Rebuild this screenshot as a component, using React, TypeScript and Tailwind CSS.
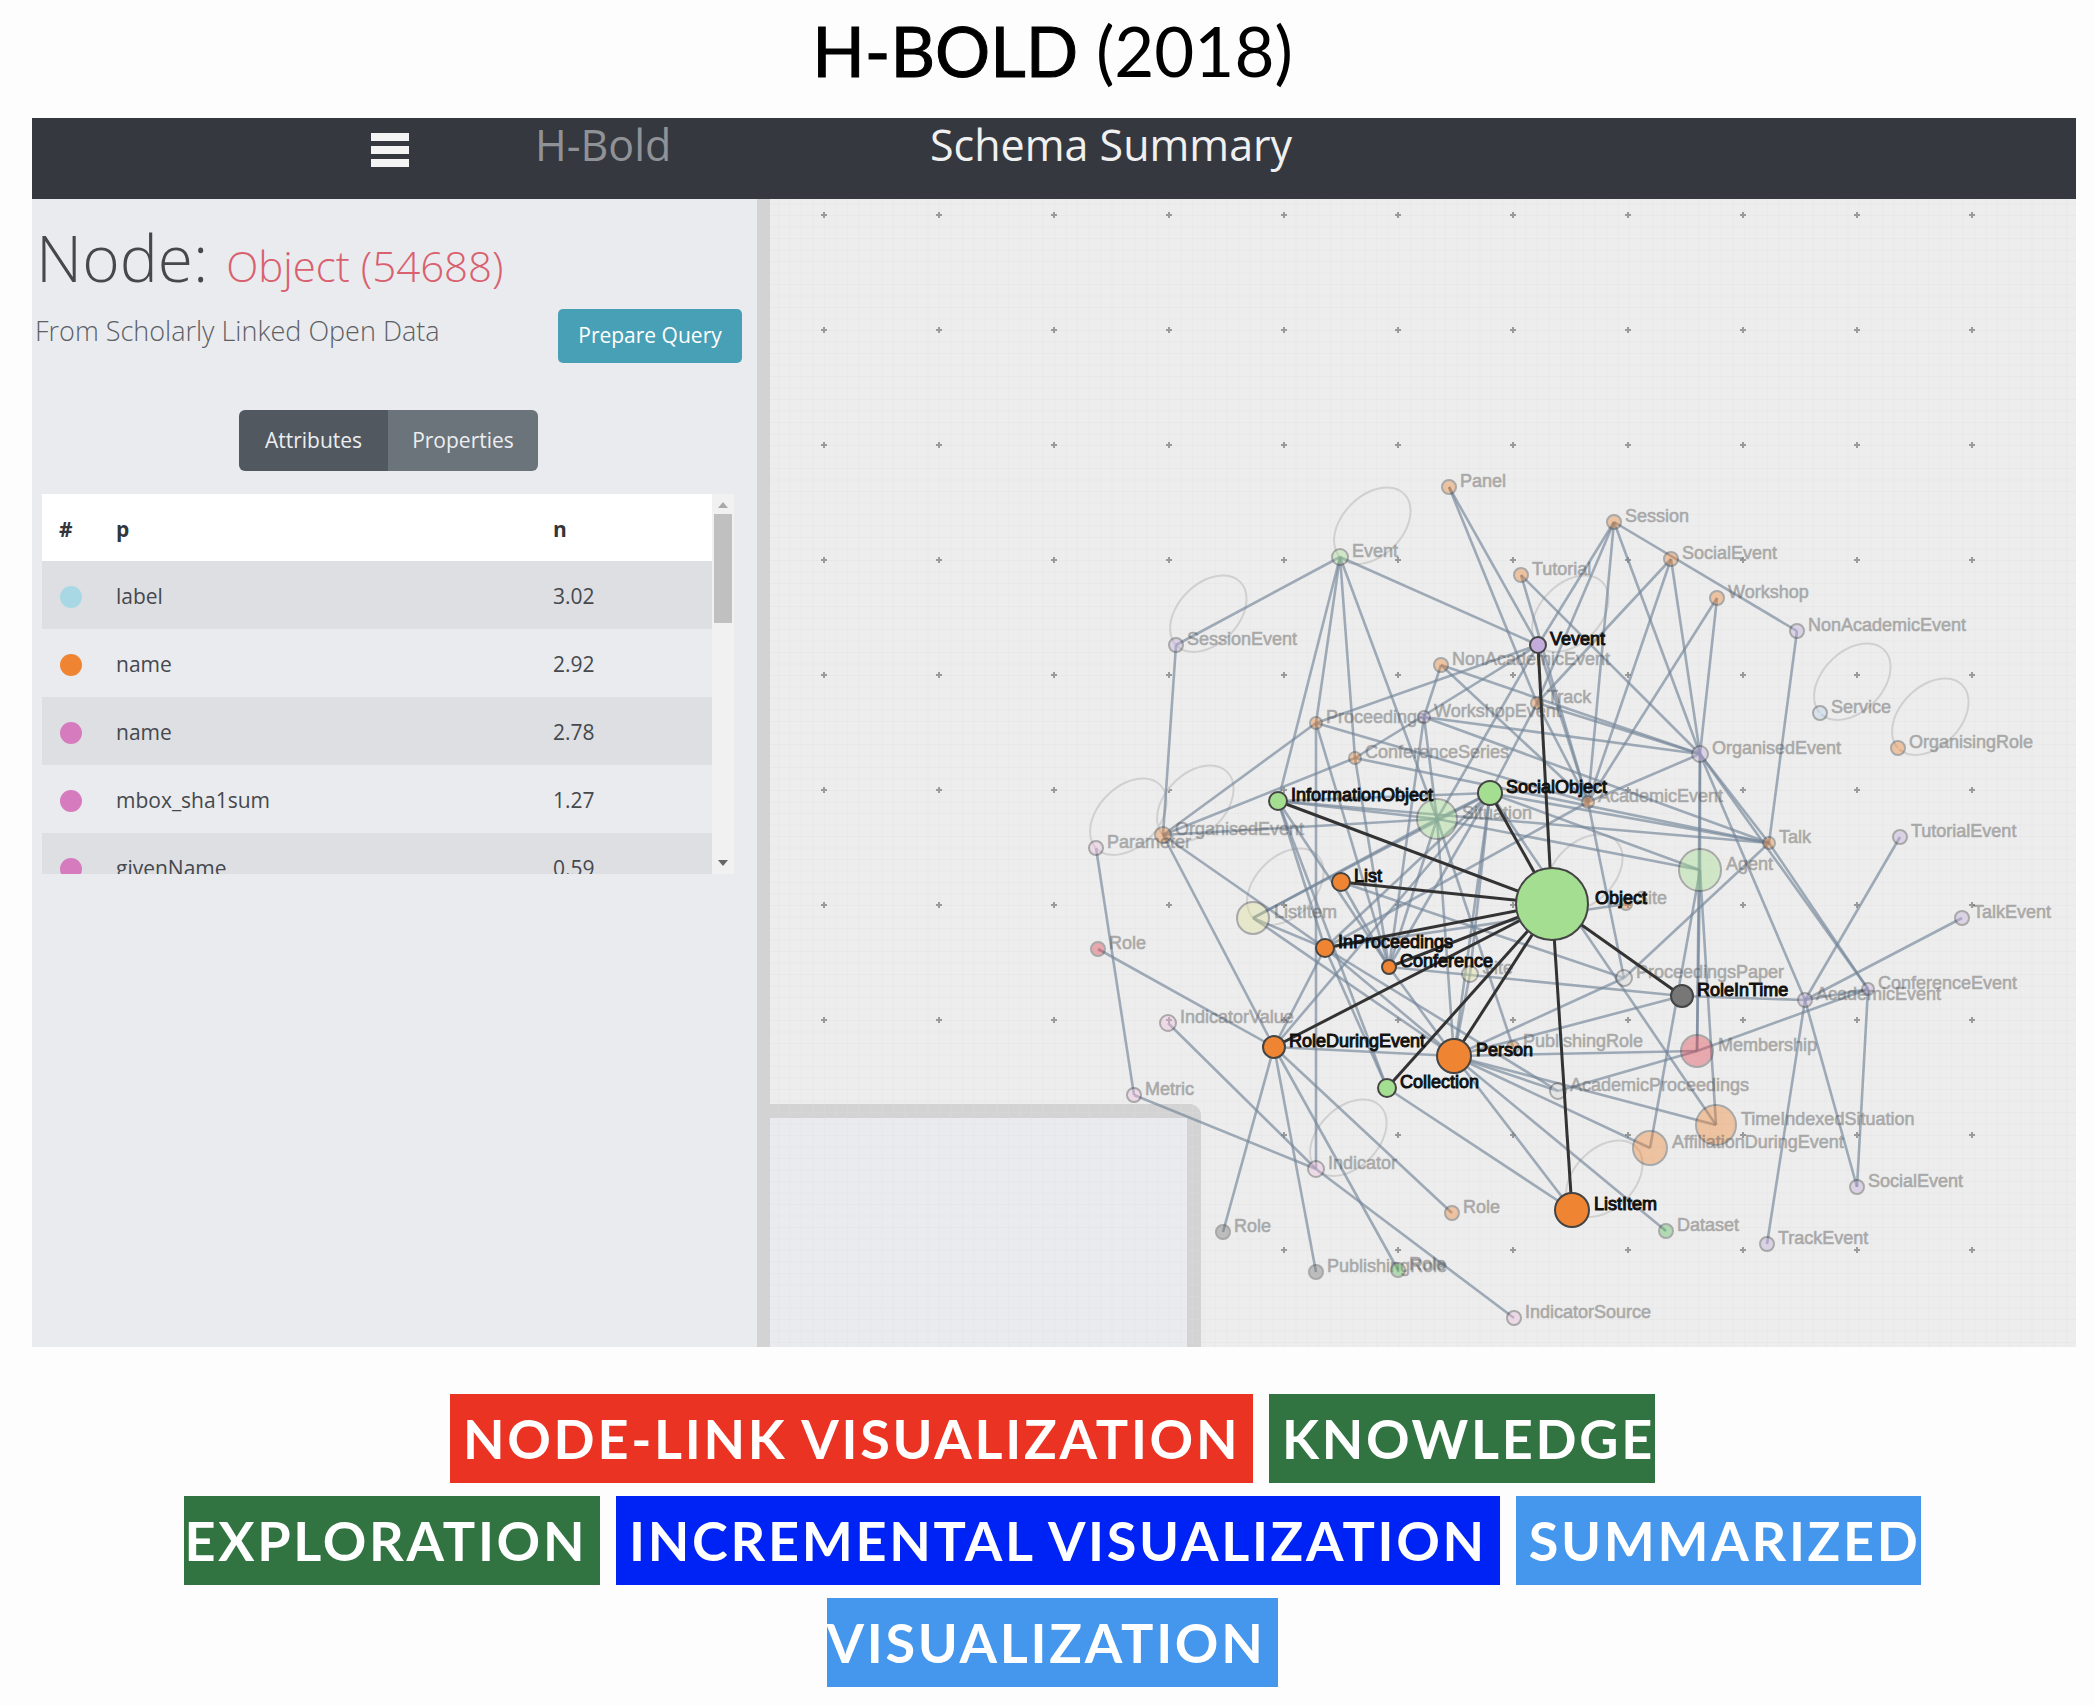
import React from "react";
import clsx from "clsx";

type GraphNode = {
    id: string;
    x: number;
    y: number;
    r: number;
    color: string;
    label?: string;
    active?: boolean;
    loop?: boolean;
};

const ORANGE = "#ef8532";
const GREEN = "#a4de90";
const PURPLE = "#c3acdc";
const PINK = "#f0bfe0";
const GRAY = "#777777";
const RED = "#e0454f";
const YELLOW = "#dfe09a";

const nodes: GraphNode[] = [
    { id: "panel", x: 1449, y: 487, r: 7, color: ORANGE, label: "Panel" },
    { id: "session", x: 1614, y: 522, r: 7, color: ORANGE, label: "Session" },
    { id: "socialEvent", x: 1671, y: 559, r: 7, color: ORANGE, label: "SocialEvent" },
    { id: "tutorial", x: 1521, y: 575, r: 7, color: ORANGE, label: "Tutorial" },
    { id: "workshop", x: 1717, y: 598, r: 7, color: ORANGE, label: "Workshop" },
    { id: "nonAcademicP", x: 1797, y: 631, r: 7, color: PURPLE, label: "NonAcademicEvent" },
    { id: "event", x: 1340, y: 557, r: 8, color: GREEN, label: "Event", loop: true },
    { id: "sessionEvent", x: 1176, y: 645, r: 7, color: PURPLE, label: "SessionEvent", loop: true },
    { id: "nonAcademic", x: 1441, y: 665, r: 7, color: ORANGE, label: "NonAcademicEvent" },
    { id: "track", x: 1537, y: 703, r: 6, color: ORANGE, label: "Track" },
    { id: "proceedings", x: 1316, y: 723, r: 6, color: ORANGE, label: "Proceedings" },
    { id: "workshopEvent", x: 1424, y: 717, r: 6, color: PURPLE, label: "WorkshopEvent" },
    { id: "conferenceSeries", x: 1355, y: 758, r: 6, color: ORANGE, label: "ConferenceSeries" },
    { id: "service", x: 1820, y: 713, r: 7, color: "#b9d3ec", label: "Service", loop: true },
    { id: "organisingRole", x: 1898, y: 748, r: 7, color: ORANGE, label: "OrganisingRole", loop: true },
    { id: "organisedP", x: 1700, y: 754, r: 8, color: PURPLE, label: "OrganisedEvent" },
    { id: "academic", x: 1588, y: 802, r: 6, color: ORANGE, label: "AcademicEvent" },
    { id: "situation", x: 1437, y: 819, r: 20, color: GREEN, label: "Situation" },
    { id: "organised", x: 1163, y: 835, r: 8, color: ORANGE, label: "OrganisedEvent", loop: true },
    { id: "parameter", x: 1096, y: 848, r: 7, color: PINK, label: "Parameter", loop: true },
    { id: "talk", x: 1769, y: 843, r: 6, color: ORANGE, label: "Talk" },
    { id: "tutorialEvent", x: 1900, y: 837, r: 7, color: PURPLE, label: "TutorialEvent" },
    { id: "talkEvent", x: 1962, y: 918, r: 7, color: PURPLE, label: "TalkEvent" },
    { id: "agent", x: 1700, y: 870, r: 21, color: GREEN, label: "Agent" },
    { id: "site", x: 1626, y: 904, r: 6, color: ORANGE, label: "Site" },
    { id: "listItemY", x: 1253, y: 918, r: 16, color: YELLOW, label: "ListItem", loop: true },
    { id: "role", x: 1098, y: 949, r: 7, color: RED, label: "Role" },
    { id: "yellow", x: 1470, y: 974, r: 8, color: YELLOW, label: "Site" },
    { id: "paper", x: 1624, y: 978, r: 8, color: "#d9d9d9", label: "ProceedingsPaper" },
    { id: "conferenceEvent", x: 1868, y: 989, r: 6, color: PURPLE, label: "ConferenceEvent" },
    { id: "academicP", x: 1805, y: 1000, r: 7, color: PURPLE, label: "AcademicEvent" },
    { id: "indicatorValue", x: 1168, y: 1023, r: 8, color: PINK, label: "IndicatorValue" },
    { id: "publishingRole", x: 1513, y: 1047, r: 6, color: ORANGE, label: "PublishingRole" },
    { id: "membership", x: 1697, y: 1051, r: 16, color: RED, label: "Membership" },
    { id: "academicProceedings", x: 1558, y: 1091, r: 8, color: "#d9d9d9", label: "AcademicProceedings" },
    { id: "metric", x: 1134, y: 1095, r: 7, color: PINK, label: "Metric" },
    { id: "timeIndexed", x: 1716, y: 1125, r: 20, color: ORANGE, label: "TimeIndexedSituation" },
    { id: "affiliation", x: 1650, y: 1148, r: 17, color: ORANGE, label: "AffiliationDuringEvent" },
    { id: "indicator", x: 1316, y: 1169, r: 8, color: PINK, label: "Indicator", loop: true },
    { id: "socialEventP", x: 1857, y: 1187, r: 7, color: PURPLE, label: "SocialEvent" },
    { id: "roleOrange", x: 1452, y: 1213, r: 7, color: ORANGE, label: "Role" },
    { id: "roleGray", x: 1223, y: 1232, r: 7, color: GRAY, label: "Role" },
    { id: "dataset", x: 1666, y: 1231, r: 7, color: "#5cbf5c", label: "Dataset" },
    { id: "trackEvent", x: 1767, y: 1244, r: 7, color: PURPLE, label: "TrackEvent" },
    { id: "publishingGray", x: 1316, y: 1272, r: 7, color: GRAY, label: "PublishingRole" },
    { id: "roleGreen", x: 1398, y: 1270, r: 7, color: "#5cbf5c", label: "Role" },
    { id: "indicatorSource", x: 1514, y: 1318, r: 7, color: PINK, label: "IndicatorSource" },
    { id: "vevent", x: 1538, y: 645, r: 8, color: PURPLE, label: "Vevent", active: true, loop: true },
    { id: "informationObject", x: 1278, y: 801, r: 9, color: GREEN, label: "InformationObject", active: true },
    { id: "socialObject", x: 1490, y: 793, r: 12, color: GREEN, label: "SocialObject", active: true },
    { id: "list", x: 1341, y: 882, r: 9, color: ORANGE, label: "List", active: true },
    { id: "inProceedings", x: 1325, y: 948, r: 9, color: ORANGE, label: "InProceedings", active: true },
    { id: "conference", x: 1389, y: 967, r: 7, color: ORANGE, label: "Conference", active: true },
    { id: "roleInTime", x: 1682, y: 996, r: 11, color: GRAY, label: "RoleInTime", active: true },
    { id: "roleDuring", x: 1274, y: 1047, r: 11, color: ORANGE, label: "RoleDuringEvent", active: true },
    { id: "person", x: 1454, y: 1056, r: 17, color: ORANGE, label: "Person", active: true },
    { id: "collection", x: 1387, y: 1088, r: 9, color: GREEN, label: "Collection", active: true },
    { id: "listItem", x: 1572, y: 1210, r: 17, color: ORANGE, label: "ListItem", active: true, loop: true },
    { id: "object", x: 1552, y: 904, r: 36, color: GREEN, label: "Object", active: true, loop: true },
];

// source -> targets
const links: Record<string, string[]> = {
    panel: ["vevent", "track"],
    tutorial: ["organisedP", "academic"],
    session: ["vevent", "track", "academic", "organisedP", "nonAcademicP"],
    socialEvent: ["track", "academic", "organisedP"],
    workshop: ["academic", "organisedP"],
    nonAcademicP: ["talk"],
    nonAcademic: ["workshopEvent", "academic", "organisedP"],
    organisedP: ["talk", "conferenceEvent", "academicP", "workshopEvent", "track", "academic", "membership", "agent"],
    talk: ["conferenceEvent", "paper", "socialObject", "conferenceSeries", "workshopEvent", "informationObject"],
    agent: ["affiliation", "membership", "timeIndexed", "socialObject", "situation"],
    event: ["sessionEvent", "vevent", "informationObject", "proceedings", "conferenceSeries", "situation"],
    organised: ["sessionEvent", "proceedings", "conferenceSeries", "roleDuring", "inProceedings", "situation"],
    proceedings: ["vevent", "indicator", "conference", "academic"],
    conferenceSeries: ["vevent", "conference"],
    workshopEvent: ["conference", "situation"],
    vevent: ["academic", "situation"],
    track: ["socialObject", "academic"],
    informationObject: ["conference", "inProceedings", "collection", "socialObject", "situation"],
    academic: ["paper", "inProceedings"],
    socialObject: ["conference", "inProceedings", "person", "yellow", "listItemY", "timeIndexed", "roleDuring", "situation"],
    situation: ["conference", "person", "listItemY", "publishingRole"],
    listItemY: ["person", "inProceedings"],
    list: ["conference", "paper"],
    conference: ["roleInTime", "person"],
    yellow: ["person"],
    inProceedings: ["person", "academicProceedings", "roleDuring", "collection", "site"],
    person: ["paper", "roleInTime", "membership", "timeIndexed", "affiliation", "listItem", "dataset", "academicProceedings"],
    membership: ["academicProceedings", "conferenceEvent"],
    collection: ["listItem"],
    academicP: ["tutorialEvent", "talkEvent", "conferenceEvent", "trackEvent", "socialEventP", "roleInTime"],
    conferenceEvent: ["socialEventP"],
    parameter: ["metric"],
    metric: ["indicator"],
    role: ["roleDuring"],
    indicatorValue: ["indicator"],
    indicator: ["indicatorSource"],
    roleDuring: ["person", "roleGray", "publishingGray", "roleGreen", "roleOrange"],
};

const activeLinks = [
    "informationObject", "socialObject", "vevent", "list", "inProceedings", "conference",
    "roleDuring", "person", "collection", "roleInTime", "listItem",
];

const byId = Object.fromEntries(nodes.map((n) => [n.id, n]));
const crossX = [824, 939, 1054, 1169, 1284, 1398, 1513, 1628, 1743, 1857, 1972];
const crossY = [215, 330, 445, 560, 675, 790, 905, 1020, 1135, 1250];

const attributes = [
    { color: "bg-[#a8d8e4]", p: "label", n: "3.02" },
    { color: "bg-[#ef8532]", p: "name", n: "2.92" },
    { color: "bg-[#d67bbd]", p: "name", n: "2.78" },
    { color: "bg-[#d67bbd]", p: "mbox_sha1sum", n: "1.27" },
    { color: "bg-[#d67bbd]", p: "givenName", n: "0.59" },
];

const Link = ({ from, to, active }: { from: string; to: string; active?: boolean }) => (
    <line
        x1={byId[from].x}
        y1={byId[from].y}
        x2={byId[to].x}
        y2={byId[to].y}
        stroke={active ? "#333333" : "#74869a"}
        strokeWidth={active ? 3 : 2.6}
        opacity={active ? 1 : 0.65}
    />
);

const Node = ({ node }: { node: GraphNode }) => (
    <g opacity={node.active ? 1 : 0.4}>
        <circle cx={node.x} cy={node.y} r={node.r} fill={node.color} stroke="#444444" strokeWidth="2" />
        <text
            x={Math.round(node.x + node.r * 1.1 + 3)}
            y={node.y}
            fill={node.active ? "#111111" : "#444444"}
            stroke={node.active ? "#111111" : "#444444"}
            strokeWidth={node.active ? 1 : 0.6}
        >
            {node.label}
        </text>
    </g>
);

function SchemaGraph() {
    return (
        <svg viewBox="770 199 1306 1148" className="relative block w-full font-['Liberation_Sans',Arial,sans-serif] text-[18px]">
            <defs>
                <pattern id="minor" x="824" y="215" width="11.5" height="11.5" patternUnits="userSpaceOnUse">
                    <path d="M11.5 0H0V11.5" fill="none" stroke="#dedede" strokeWidth="1" />
                </pattern>
            </defs>
            <rect x="770" y="199" width="1306" height="1148" fill="url(#minor)" opacity="0.6" />
            {crossY.map((y) =>
                crossX
                    .filter((x) => y < 1100 || x > 1200)
                    .map((x) => (
                        <path key={`${x}-${y}`} d={`M${x - 3} ${y}h6M${x} ${y - 3}v6`} stroke="#9a9a9a" strokeWidth="2" />
                    ))
            )}
            {nodes.filter((n) => n.loop).map((n) => (
                <path
                    key={n.id}
                    d={`M${n.x} ${n.y}A45 30 -45 1 1 ${n.x + 1} ${n.y + 1}`}
                    fill="none"
                    stroke="#d0d0d0"
                    strokeWidth="2"
                />
            ))}
            {Object.entries(links).map(([from, targets]) =>
                targets.map((to) => <Link key={`${from}-${to}`} from={from} to={to} />)
            )}
            {nodes.filter((n) => !n.active).map((n) => <Node key={n.id} node={n} />)}
            {activeLinks.map((to) => <Link key={to} from="object" to={to} active />)}
            {nodes.filter((n) => n.active).map((n) => <Node key={n.id} node={n} />)}
        </svg>
    );
}

function NodePanel() {
    return (
        <aside className="w-[725px] shrink-0 bg-[#e9ebef] text-[#45484d]">
            <h2 className="flex items-baseline gap-[18px] pt-4 pl-1 text-[64px] leading-[86px] font-light">
                Node:
                <span className="text-[42px] text-[#d9606e]">Object (54688)</span>
            </h2>
            <div className="flex items-start justify-between pr-[15px] pl-[3px]">
                <p className="pt-1 text-[27px] leading-[36px] font-light text-[#5c6065]">From Scholarly Linked Open Data</p>
                <button className="h-[54px] w-[184px] rounded-[5px] bg-[#48a0b6] text-[21px] font-medium text-white">Prepare Query</button>
            </div>
            <div className="mt-[47px] flex h-[61px] justify-center pr-[12px] text-[21px] font-medium text-[#eceef0]">
                <button className="w-[149px] rounded-l-[6px] bg-[#52585f]">Attributes</button>
                <button className="w-[150px] rounded-r-[6px] bg-[#6b737b]">Properties</button>
            </div>
            <div className="mt-[23px] mr-[23px] ml-[10px] flex h-[380px] overflow-hidden">
                <div className="grow overflow-hidden">
                    <table className="w-full table-fixed text-left text-[21px]">
                        <thead className="bg-white text-[#33363b]">
                            <tr className="h-[67px]">
                                <th className="w-[74px] pt-1 pl-[17px]">#</th>
                                <th className="w-[437px] pt-1">p</th>
                                <th className="pt-1">n</th>
                            </tr>
                        </thead>
                        <tbody>
                            {attributes.map((row, index) => (
                                <tr key={index} className="h-[68px] odd:bg-[#dddfe3]">
                                    <td className="pt-1 pl-[18px]">
                                        <span className={clsx("block size-[22px] rounded-full", row.color)} />
                                    </td>
                                    <td className="pt-1">{row.p}</td>
                                    <td className="pt-1">{row.n}</td>
                                </tr>
                            ))}
                        </tbody>
                    </table>
                </div>
                <div className="flex w-[22px] shrink-0 flex-col items-center bg-[#f1f1f1] pb-2">
                    <svg viewBox="0 0 10 6" className="mt-2 h-[6px] w-[10px]"><path d="M0 6L5 0L10 6Z" fill="#a9a9a9" /></svg>
                    <div className="mt-[6px] h-[109px] w-[18px] bg-[#c0c0c0]" />
                    <svg viewBox="0 0 10 6" className="mt-auto h-[6px] w-[10px]"><path d="M0 0L5 6L10 0Z" fill="#666666" /></svg>
                </div>
            </div>
        </aside>
    );
}

const Tag = ({ className, children }: { className: string; children: React.ReactNode }) => (
    <span className={clsx("px-[13px] py-3", className)}>{children}</span>
);

export default function App() {
    return (
        <main className="bg-[#fdfdfd] pb-[11px] font-['Lato',sans-serif]">
            <h1 className="pt-[8px] pl-[10px] text-center text-[69px] leading-[86px] text-black">
                <span className="[-webkit-text-stroke:1px_black]">H-BOLD</span> (2018)
            </h1>
            <section className="mt-6 mr-[19px] ml-8 font-['Open_Sans','Noto_Sans',sans-serif]">
                <header className="flex h-[81px] items-start bg-[#35393f] text-[43px] leading-[54px]">
                    <button aria-label="Menu" className="mt-[15px] ml-[339px] flex w-[38px] flex-col gap-[5px]">
                        <span className="h-[8px] w-full bg-[#f4f4f4]" />
                        <span className="h-[8px] w-full bg-[#f4f4f4]" />
                        <span className="h-[8px] w-full bg-[#f4f4f4]" />
                    </button>
                    <a href="#" className="ml-[126px] w-[395px] text-[#8f9296]">H-Bold</a>
                    <span className="text-[#f0f0f0]">Schema Summary</span>
                </header>
                <div className="flex">
                    <NodePanel />
                    <div className="relative grow border-l-[13px] border-[#d3d3d3] bg-[#ededed]">
                        <div className="absolute bottom-0 left-0 h-[243px] w-[33%] rounded-tr-[12px] border-t-[14px] border-r-[14px] border-[#d3d3d3] bg-[#e9ebef]" />
                        <SchemaGraph />
                    </div>
                </div>
            </section>
            <p className="mt-[41px] pl-[10px] text-center text-[54px] leading-[102px] font-bold tracking-wider text-white">
                <Tag className="bg-[#eb3323]">NODE-LINK VISUALIZATION</Tag>{" "}
                <Tag className="bg-[#317442]">KNOWLEDGE<br />EXPLORATION</Tag>{" "}
                <Tag className="bg-[#0023f5]">INCREMENTAL VISUALIZATION</Tag>{" "}
                <Tag className="bg-[#4497ec]">SUMMARIZED<br />VISUALIZATION</Tag>
            </p>
        </main>
    );
}
